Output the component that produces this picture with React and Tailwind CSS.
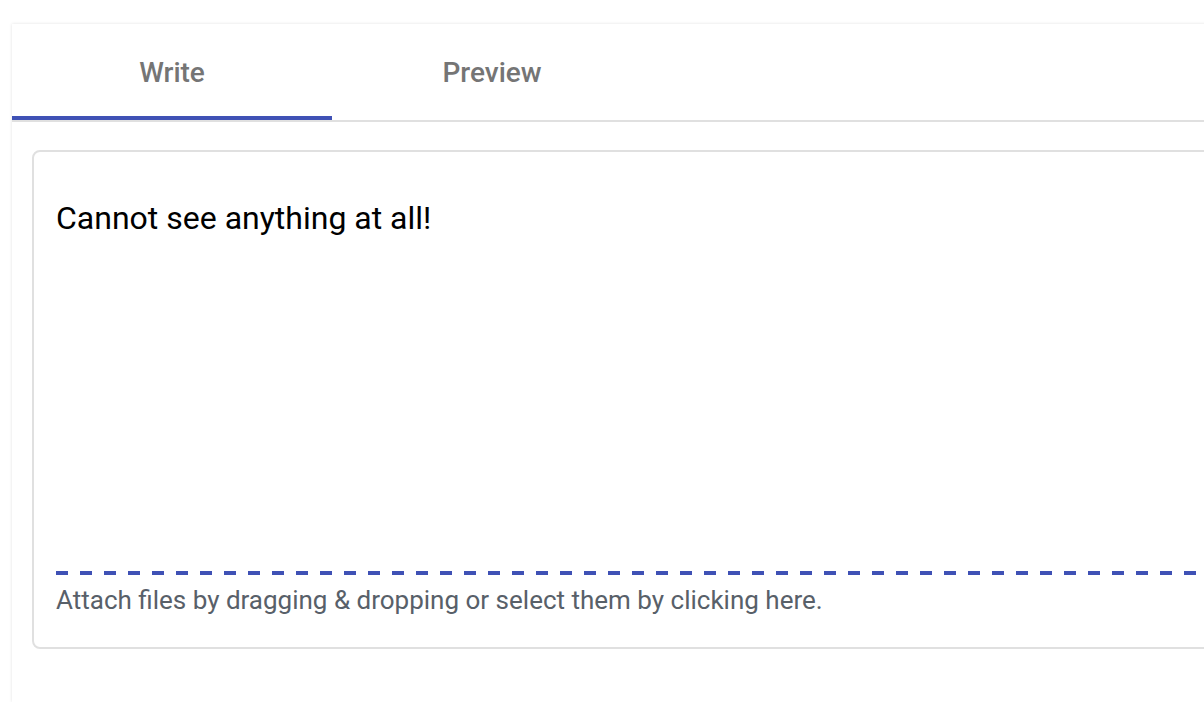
export default function App() {
  return (
    <div className="h-[702px] w-[1204px] overflow-hidden bg-white pl-[12px] pt-[24px]" style={{ fontFamily: 'Roboto, "Liberation Sans", sans-serif' }}>
      <div className="h-full w-[1300px] bg-white shadow-[0_0_3px_rgba(0,0,0,0.12)]">
        <div className="flex h-[96px]">
          <div className="relative flex w-[320px] items-center justify-center pt-[2px] text-[28px] font-medium text-[#757575]">
            Write
            <div className="absolute bottom-0 left-0 h-[4px] w-full bg-[#3f51b5]" />
          </div>
          <div className="flex w-[320px] items-center justify-center pt-[2px] text-[28px] font-medium text-[#757575]">
            Preview
          </div>
        </div>
        <div className="h-[2px] bg-[#e0e0e0]" />
        <div className="pl-[20px] pt-[28px]">
          <div className="flex h-[499px] w-[1260px] flex-col rounded-[8px] border-2 border-[#e0e0e0] px-[22px]">
            <div className="flex-1 pt-[46px] text-[32px] leading-[40px] text-black">
              Cannot see anything at all!
            </div>
            <div className="h-[4px] bg-[repeating-linear-gradient(to_right,#3f51b5_0,#3f51b5_12px,transparent_12px,transparent_24px)]" />
            <div className="pb-[31px] pt-[9px] text-[26px] leading-[32px] text-[#586069]">
              Attach files by dragging &amp; dropping or select them by clicking here.
            </div>
          </div>
        </div>
      </div>
    </div>
  );
}
